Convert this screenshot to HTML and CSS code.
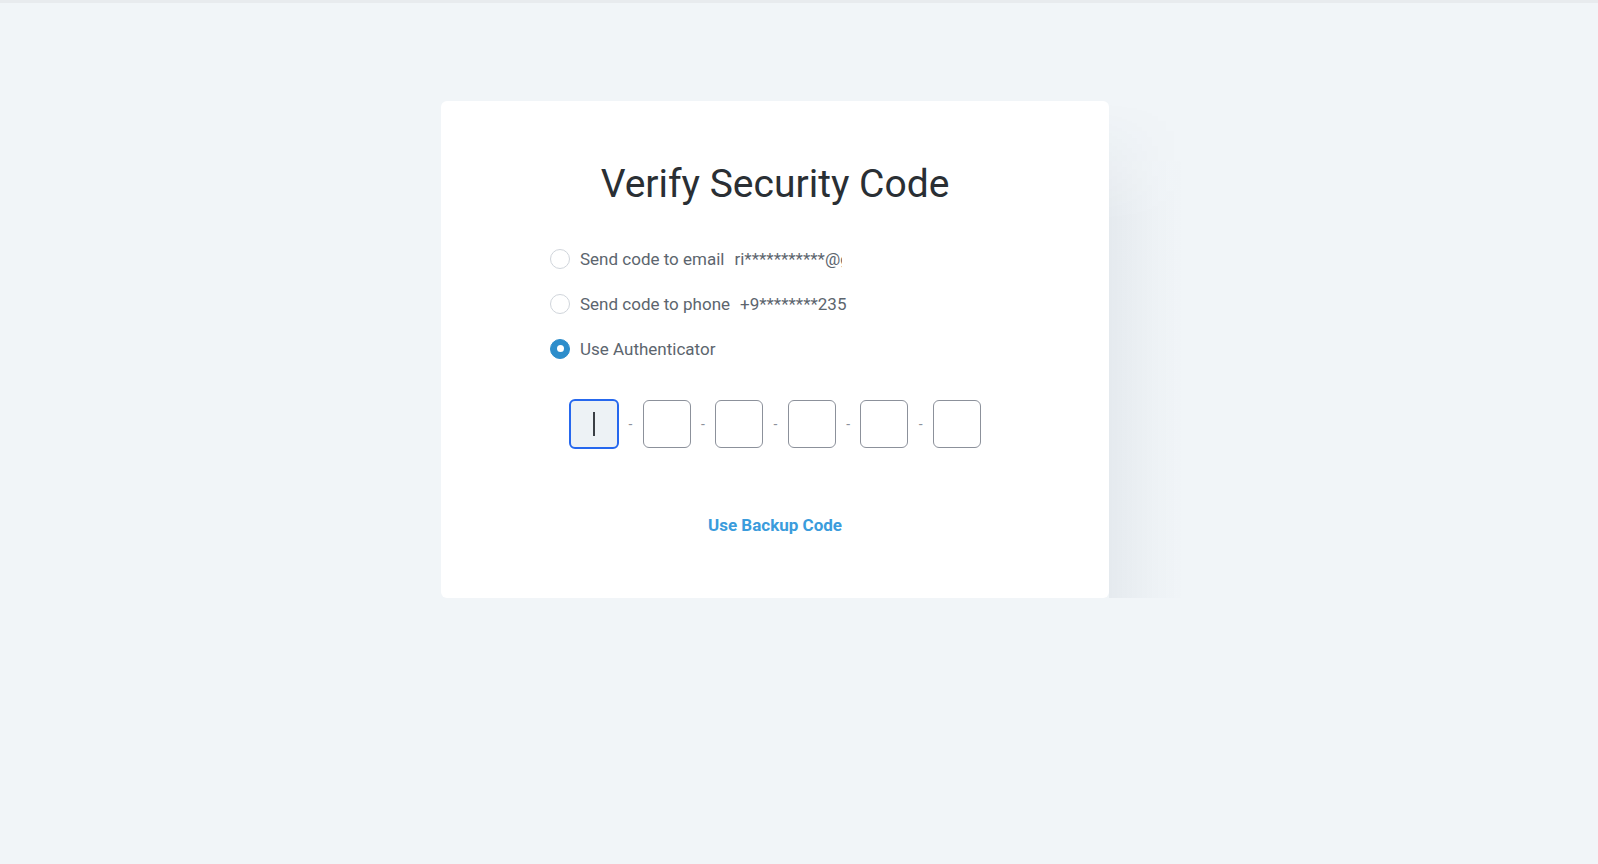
FILE: index.html
```html
<!DOCTYPE html>
<html lang="en">
<head>
<meta charset="utf-8">
<title>Verify Security Code</title>
<link rel="stylesheet" href="styles.css">
</head>
<body>
<div class="page">
  <div class="card">
    <h1 class="title">Verify Security Code</h1>
    <div class="options">
      <label class="option">
        <span class="radio"></span>
        <span class="label">Send code to email</span>
        <span class="value value-email">ri***********@gmail.com</span>
      </label>
      <label class="option">
        <span class="radio"></span>
        <span class="label">Send code to phone</span>
        <span class="value">+9********235</span>
      </label>
      <label class="option">
        <span class="radio radio-on"></span>
        <span class="label">Use Authenticator</span>
      </label>
    </div>
    <div class="code">
      <div class="box box-focus"><span class="caret"></span></div>
      <span class="dash">-</span>
      <div class="box"></div>
      <span class="dash">-</span>
      <div class="box"></div>
      <span class="dash">-</span>
      <div class="box"></div>
      <span class="dash">-</span>
      <div class="box"></div>
      <span class="dash">-</span>
      <div class="box"></div>
    </div>
    <a class="backup" href="#">Use Backup Code</a>
  </div>
</div>
</body>
</html>
```

FILE: styles.css
```css
html, body {
  margin: 0;
  padding: 0;
  height: 100%;
}
body {
  background: #f1f5f8;
  border-top: 3px solid #e8ebee;
  box-sizing: border-box;
  font-family: Roboto, "Liberation Sans", Arial, sans-serif;
}
.page {
  display: flex;
  justify-content: center;
  padding-top: 98px;
  padding-right: 48px;
}
.card {
  position: relative;
  width: 668px;
  height: 497px;
  box-sizing: border-box;
  background: #ffffff;
  border-radius: 6px;
  padding-top: 59px;
  display: flex;
  flex-direction: column;
  align-items: center;
}
.card::after {
  content: "";
  position: absolute;
  top: 0;
  bottom: 0;
  left: 100%;
  width: 76px;
  background: linear-gradient(to right, rgba(20, 40, 70, 0.05), rgba(20, 40, 70, 0.015) 60%, rgba(20, 40, 70, 0));
  -webkit-mask-image: linear-gradient(to bottom, rgba(0,0,0,0) 0, rgba(0,0,0,1) 120px);
  mask-image: linear-gradient(to bottom, rgba(0,0,0,0) 0, rgba(0,0,0,1) 120px);
  pointer-events: none;
}
.title {
  margin: 0;
  font-size: 39px;
  line-height: 48px;
  font-weight: 400;
  color: #2a2f34;
}
.options {
  width: 450px;
  margin-top: 28px;
  display: flex;
  flex-direction: column;
}
.option {
  display: flex;
  align-items: center;
  height: 45px;
  font-size: 17px;
  color: #5c656e;
}
.radio {
  width: 18px;
  height: 18px;
  border: 1px solid #d0d5db;
  border-radius: 50%;
  margin-right: 10px;
  flex: none;
  box-sizing: content-box;
  display: flex;
  align-items: center;
  justify-content: center;
}
.radio-on {
  background: #2d8dcb;
  border-color: #2d8dcb;
}
.radio-on::after {
  content: "";
  width: 7px;
  height: 7px;
  border-radius: 50%;
  background: #ffffff;
}
.value {
  margin-left: 10px;
  white-space: nowrap;
}
.value-email {
  width: 108px;
  overflow: hidden;
}
.code {
  margin-top: 29px;
  display: flex;
  align-items: center;
}
.box {
  width: 48px;
  height: 48px;
  box-sizing: border-box;
  border: 1.5px solid #8c919b;
  border-radius: 6px;
  background: #ffffff;
  display: flex;
  align-items: center;
  justify-content: center;
}
.box-focus {
  width: 50px;
  height: 50px;
  margin: -1px -1px -1px 0;
  border: 2px solid #2668ee;
  background: #edf2f5;
}
.caret {
  width: 1.5px;
  height: 24px;
  background: #3a3f44;
}
.dash {
  width: 24.6px;
  text-align: center;
  font-size: 14px;
  color: #8c919b;
}
.backup {
  margin-top: 67px;
  font-size: 17px;
  line-height: 20px;
  font-weight: 700;
  color: #3b9cdc;
  text-decoration: none;
}
```
